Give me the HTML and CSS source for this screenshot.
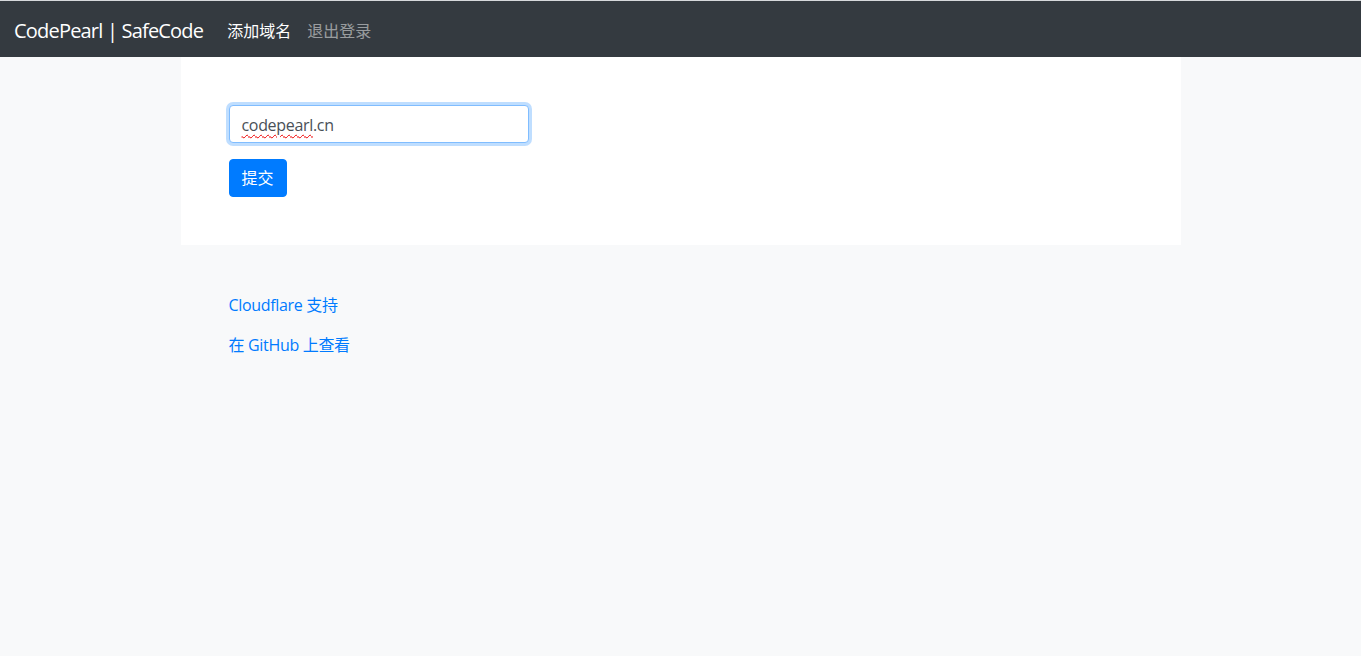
FILE: index.html
```html
<!DOCTYPE html>
<html lang="zh-CN">
<head>
    <meta charset="UTF-8">
    <meta name="viewport" content="width=device-width, initial-scale=1.0">
    <title>添加域名 - CodePearl | SafeCode</title>
    <link rel="stylesheet" href="styles.css">
</head>
<body>
    <nav class="navbar">
        <a class="navbar-brand" href="#">CodePearl | SafeCode</a>
        <ul class="nav">
            <li><a class="nav-link active" href="#">添加域名</a></li>
            <li><a class="nav-link" href="#">退出登录</a></li>
        </ul>
    </nav>

    <main class="container">
        <form class="panel">
            <div class="form-group">
                <div class="form-control focused"><span class="misspelled">codepearl</span>.cn</div>
            </div>
            <button type="button" class="btn btn-primary">提交</button>
        </form>

        <div class="links">
            <p><a href="#">Cloudflare 支持</a></p>
            <p><a href="#">在 GitHub 上查看</a></p>
        </div>
    </main>
</body>
</html>
```

FILE: styles.css
```css
* {
    box-sizing: border-box;
}

body {
    margin: 0;
    border-top: 1px solid #d6d8db;
    background-color: #f8f9fa;
    color: #212529;
    font-family: "Open Sans", "Noto Sans CJK SC", sans-serif;
    font-size: 16px;
    line-height: 1.5;
    letter-spacing: -0.02em;
}

a {
    color: #007bff;
    text-decoration: none;
}

.navbar {
    display: flex;
    align-items: center;
    height: 56px;
    padding: 3px 16px 0 14px;
    background-color: #343a40;
}

.navbar-brand {
    margin-right: 16px;
    color: #fff;
    font-size: 20px;
    line-height: 30px;
    letter-spacing: -0.04em;
}

.nav {
    display: flex;
    margin: 0;
    padding: 0;
    list-style: none;
}

.nav-link {
    display: block;
    padding: 8px;
    color: rgba(255, 255, 255, 0.5);
    letter-spacing: 0;
}

.nav-link.active {
    color: #fff;
}

.container {
    width: 1000px;
    margin: 0 auto;
}

.panel {
    margin: 0;
    padding: 48px;
    background-color: #fff;
}

.form-group {
    margin-bottom: 16px;
}

.form-control {
    width: 300px;
    height: 38px;
    padding: 7px 12px 5px;
    border: 1px solid #ced4da;
    border-radius: 4px;
    background-color: #fff;
    color: #495057;
}

.form-control.focused {
    border-color: #80bdff;
    box-shadow: 0 0 0 3px rgba(0, 123, 255, 0.25);
}

.misspelled {
    text-decoration: underline wavy #e00;
    text-decoration-thickness: 1px;
    text-underline-offset: 3px;
}

.btn {
    height: 38px;
    padding: 6px 12px;
    border: 1px solid transparent;
    border-radius: 4px;
    font-family: inherit;
    font-size: 16px;
    line-height: 1.5;
    letter-spacing: 0;
    cursor: pointer;
}

.btn-primary {
    background-color: #007bff;
    border-color: #007bff;
    color: #fff;
}

.links {
    padding: 48px;
}

.links p {
    margin: 0 0 16px;
}
```
